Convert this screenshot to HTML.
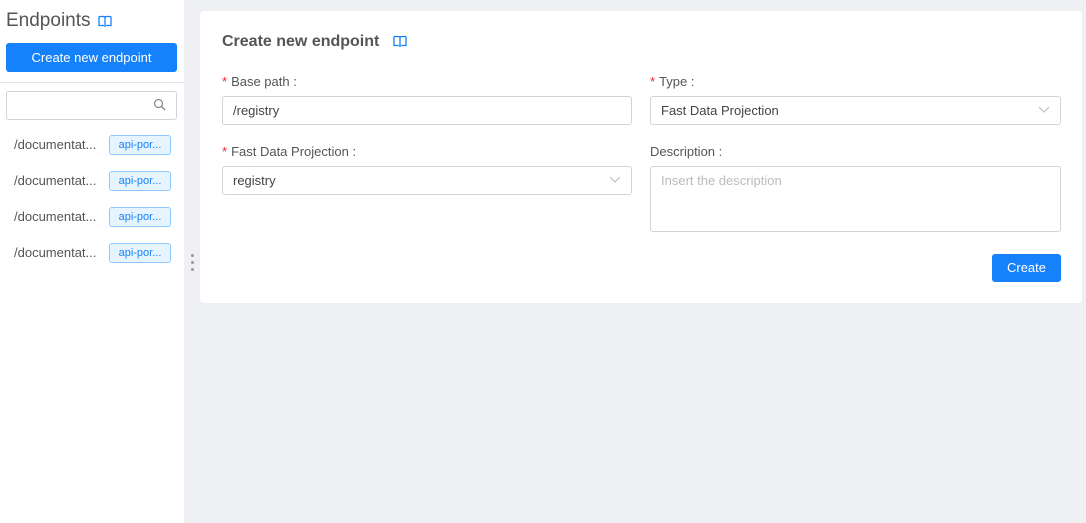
<!DOCTYPE html>
<html><head><style>
*{box-sizing:border-box;margin:0;padding:0}
body{width:1086px;height:523px;background:#eff0f4;font-family:"Liberation Sans",sans-serif;position:relative;overflow:hidden;color:#333}
.side{position:absolute;left:0;top:0;width:184px;height:523px;background:#fff}
.abs{position:absolute}
.btn{background:#1582fb;color:#fff;border-radius:3px;text-align:center;font-size:13px}
.inp{border:1px solid #d3d3d3;border-radius:3px;background:#fff;font-size:13px;color:#444}
.tag{position:absolute;left:109px;width:62px;height:20px;border:1px solid #8cc8ff;background:#e6f4ff;border-radius:3px;color:#1582fb;font-size:11px;line-height:18px;text-align:center}
.item{position:absolute;left:14px;font-size:13px;color:#555}
.lbl{position:absolute;font-size:13px;color:#555}
.lbl b{color:#f5222d;font-weight:normal;margin-right:4px}
.chev{position:absolute;right:10px;top:8px}
</style></head><body>
<div class="side">
<div class="abs" style="left:6px;top:10px;font-size:19px;color:#555">Endpoints</div>
<svg class="abs" style="left:98px;top:15px" width="14" height="13" viewBox="0 0 14 13"><path d="M1 1.5h4.5q1.5 0 1.5 1.5v9M13 1.5H8.5Q7 1.5 7 3M1 1.5v9h5M13 1.5v9H8" fill="none" stroke="#1582fb" stroke-width="1.3"/></svg>
<div class="abs btn" style="left:6px;top:43px;width:171px;height:29px;line-height:29px">Create new endpoint</div>
<div class="abs" style="left:0;top:82px;width:184px;height:1px;background:#e5e5e5"></div>
<div class="abs inp" style="left:6px;top:91px;width:171px;height:29px"></div>
<svg class="abs" style="left:153px;top:98px" width="13" height="13" viewBox="0 0 13 13"><circle cx="5.5" cy="5.5" r="4" fill="none" stroke="#888" stroke-width="1.2"/><path d="M8.5 8.5l3.5 3.5" stroke="#888" stroke-width="1.3"/></svg>
<div class="item" style="top:137px">/documentat...</div><div class="tag" style="top:135px">api-por...</div>
<div class="item" style="top:173px">/documentat...</div><div class="tag" style="top:171px">api-por...</div>
<div class="item" style="top:209px">/documentat...</div><div class="tag" style="top:207px">api-por...</div>
<div class="item" style="top:245px">/documentat...</div><div class="tag" style="top:243px">api-por...</div>
</div>
<div class="abs" style="left:191px;top:254px;width:3px;height:3px;border-radius:2px;background:#999"></div>
<div class="abs" style="left:191px;top:261px;width:3px;height:3px;border-radius:2px;background:#999"></div>
<div class="abs" style="left:191px;top:268px;width:3px;height:3px;border-radius:2px;background:#999"></div>
<div class="abs" style="left:200px;top:11px;width:882px;height:292px;background:#fff;border-radius:4px">
<div class="abs" style="left:22px;top:22px;font-size:16px;font-weight:bold;color:#555">Create new endpoint</div>
<svg class="abs" style="left:193px;top:24px" width="14" height="13" viewBox="0 0 14 13"><path d="M1 1.5h4.5q1.5 0 1.5 1.5v9M13 1.5H8.5Q7 1.5 7 3M1 1.5v9h5M13 1.5v9H8" fill="none" stroke="#1582fb" stroke-width="1.3"/></svg>
<div class="lbl" style="left:22px;top:63px"><b>*</b>Base path :</div>
<div class="abs inp" style="left:22px;top:85px;width:410px;height:29px;line-height:27px;padding-left:10px">/registry</div>
<div class="lbl" style="left:22px;top:133px"><b>*</b>Fast Data Projection :</div>
<div class="abs inp" style="left:22px;top:155px;width:410px;height:29px;line-height:27px;padding-left:10px">registry<svg class="chev" width="12" height="10" viewBox="0 0 12 10"><path d="M1 2l5 5 5-5" fill="none" stroke="#bbb" stroke-width="1.1"/></svg></div>
<div class="lbl" style="left:450px;top:63px"><b>*</b>Type :</div>
<div class="abs inp" style="left:450px;top:85px;width:411px;height:29px;line-height:27px;padding-left:10px">Fast Data Projection<svg class="chev" width="12" height="10" viewBox="0 0 12 10"><path d="M1 2l5 5 5-5" fill="none" stroke="#bbb" stroke-width="1.1"/></svg></div>
<div class="lbl" style="left:450px;top:133px">Description :</div>
<div class="abs inp" style="left:450px;top:155px;width:411px;height:66px;padding:6px 10px;color:#bbb">Insert the description</div>
<div class="abs btn" style="left:792px;top:243px;width:69px;height:28px;line-height:28px">Create</div>
</div>
</body></html>
